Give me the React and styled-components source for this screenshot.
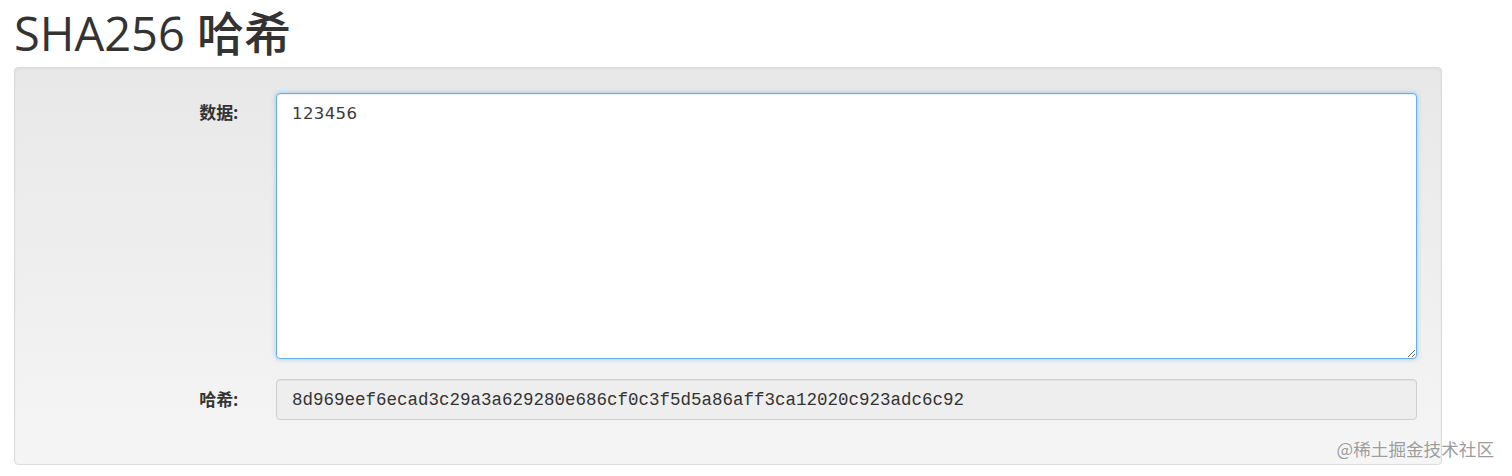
import React from "react";
import styled, { createGlobalStyle } from "styled-components";

const GlobalStyle = createGlobalStyle`
  body {
    margin: 0;
    background: #fff;
    font-family: "Open Sans", "Noto Sans CJK SC", sans-serif;
    color: #333;
  }
`;

const Page = styled.div`
  position: relative;
  width: 1512px;
  height: 476px;
  padding: 0 70px 0 14px;
  box-sizing: border-box;
  overflow: hidden;
`;

const Title = styled.h1`
  margin: 0 0 1px;
  height: 66px;
  line-height: 66px;
  font-size: 47px;
  font-weight: 500;
  color: #333;
  font-family: "Open Sans", "Noto Sans CJK SC", sans-serif;
`;

const Well = styled.div`
  width: 1428px;
  box-sizing: border-box;
  padding: 25px 24px 44px 0;
  border: 1px solid #dcdcdc;
  border-radius: 4px;
  background: linear-gradient(to bottom, #e8e8e8 0%, #f5f5f5 100%);
  box-shadow: inset 0 1px 3px rgba(0, 0, 0, 0.05), 0 1px 0 rgba(255, 255, 255, 0.1);
  display: flex;
  flex-direction: column;
  gap: 20px;
`;

const Row = styled.div`
  display: grid;
  grid-template-columns: 223px 1fr;
  column-gap: 38px;
  align-items: ${(p) => (p.top ? "start" : "center")};
`;

const Label = styled.label`
  text-align: right;
  font-size: 17px;
  font-weight: 700;
  color: #333;
  font-family: "Open Sans", "Noto Sans CJK SC", sans-serif;
  padding-top: ${(p) => (p.top ? "9px" : "0")};
  line-height: 22px;
`;

const TextArea = styled.textarea`
  display: block;
  width: 100%;
  height: 266px;
  box-sizing: border-box;
  margin: 0;
  padding: 9px 15px;
  border: 1px solid #66afe9;
  border-radius: 4px;
  background: #fff;
  outline: none;
  box-shadow: inset 0 1px 1px rgba(0, 0, 0, 0.075), 0 0 5px rgba(102, 175, 233, 0.6);
  font-family: "DejaVu Sans", sans-serif;
  font-size: 16.5px;
  line-height: 22px;
  letter-spacing: 0.4px;
  color: #3a3a3a;
`;

const HashBox = styled.div`
  height: 41px;
  box-sizing: border-box;
  padding: 0 15px;
  border: 1px solid #cfcfcf;
  border-radius: 4px;
  background: #eeeeee;
  box-shadow: inset 0 1px 1px rgba(0, 0, 0, 0.05);
  display: flex;
  align-items: center;
  font-family: "Liberation Mono", monospace;
  font-size: 17.5px;
  color: #333;
`;

const Watermark = styled.div`
  position: absolute;
  right: 18px;
  bottom: 16px;
  font-size: 17.6px;
  line-height: 22px;
  color: #9c9c9c;
  font-family: "Noto Sans CJK SC", sans-serif;
  text-shadow: 0 0 2px #fff;
`;

export default function App() {
  return (
    <>
      <GlobalStyle />
      <Page>
        <Title>SHA256 哈希</Title>
        <Well>
          <Row top>
            <Label top>数据:</Label>
            <TextArea defaultValue="123456" readOnly />
          </Row>
          <Row>
            <Label>哈希:</Label>
            <HashBox>8d969eef6ecad3c29a3a629280e686cf0c3f5d5a86aff3ca12020c923adc6c92</HashBox>
          </Row>
        </Well>
        <Watermark>@稀土掘金技术社区</Watermark>
      </Page>
    </>
  );
}
